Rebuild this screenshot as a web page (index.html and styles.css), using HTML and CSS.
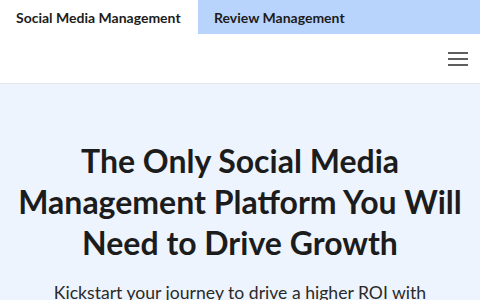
FILE: index.html
```html
<!DOCTYPE html>
<html lang="en">
<head>
<meta charset="utf-8">
<link rel="stylesheet" href="styles.css">
</head>
<body>
<div class="tabs">
  <div class="tab active">Social Media Management</div>
  <div class="tab alt">Review Management</div>
</div>
<header class="header">
  <button class="menu" aria-label="Menu">
    <svg width="20" height="14" viewBox="0 0 20 14"><path d="M0 1h20M0 7h20M0 13h20" stroke="#2a2a2a" stroke-width="1.6"/></svg>
  </button>
</header>
<section class="hero">
  <h1>The Only Social Media Management Platform You Will Need to Drive Growth</h1>
  <p>Kickstart your journey to drive a higher ROI with</p>
</section>
</body>
</html>
```
FILE: styles.css
```css
* { box-sizing: border-box; }
html, body { margin: 0; padding: 0; }
body { font-family: Lato, "Noto Sans", sans-serif; color: #1c1c1c; background: #eef4fd; width: 480px; height: 300px; overflow: hidden; }
.tabs { display: flex; height: 34px; background: #b9d4fc; }
.tab { display: flex; align-items: center; font-size: 14px; font-weight: 700; color: #1c1c1c; }
.tab.active { background: #fff; width: 198px; padding-left: 16px; }
.tab.alt { padding-left: 16px; flex: 1; }
.header { height: 50px; background: #fff; border-bottom: 1px solid #e4e7ec; display: flex; justify-content: flex-end; align-items: center; padding-right: 12px; }
.menu { border: 0; background: none; padding: 0; width: 20px; height: 14px; display: block; }
.menu svg { display: block; }
.hero { text-align: center; padding: 56px 14px 0; }
.hero h1 { margin: 0; font-size: 32px; line-height: 41px; font-weight: 700; color: #1c1c1c; }
.hero p { margin: 18px 0 0; font-size: 17.6px; line-height: 24px; color: #2a2a2a; }
```
